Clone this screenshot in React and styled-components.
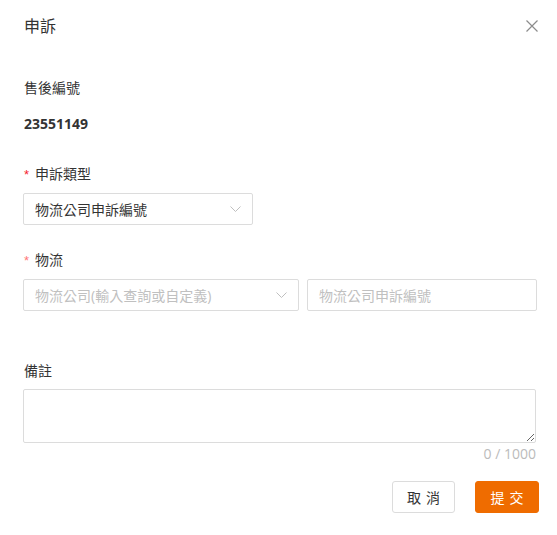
import React from "react";
import styled, { createGlobalStyle } from "styled-components";

const Global = createGlobalStyle`
  html, body { margin: 0; padding: 0; background: #fff; }
  body {
    font-family: "Open Sans", "Noto Sans CJK TC", sans-serif;
    color: #333;
    font-size: 14px;
  }
  * { box-sizing: border-box; }
`;

const Dialog = styled.div`
  width: 557px;
  height: 535px;
  background: #fff;
  display: flex;
  flex-direction: column;
`;

const Header = styled.div`
  height: 52px;
  display: flex;
  align-items: center;
  justify-content: space-between;
  padding: 0 19px 0 23px;
`;

const Title = styled.div`
  font-size: 16px;
  line-height: 20px;
  color: #333;
  padding-left: 1px;
`;

const Close = styled.button`
  border: 0;
  background: none;
  padding: 0;
  width: 12px;
  height: 12px;
  display: flex;
  cursor: pointer;
`;

const Body = styled.div`
  padding: 26px 20px 0 23px;
  display: flex;
  flex-direction: column;
`;

const Label = styled.div`
  font-size: 14px;
  line-height: 20px;
  color: #333;
  padding-left: 1px;
  margin-top: ${(p) => p.$mt || 0}px;
  display: flex;
  align-items: center;
`;

const Star = styled.span`
  color: ${(p) => p.$color};
  margin-right: 6px;
  font-family: "Liberation Sans", sans-serif;
  font-size: 13px;
  position: relative;
  top: 1px;
`;

const Value = styled.div`
  font-weight: 700;
  font-size: 14px;
  line-height: 20px;
  color: #333;
  margin-top: 16px;
  padding-left: 1px;
`;

const Row = styled.div`
  display: flex;
  gap: 8px;
  margin-top: 9px;
`;

const SelectBox = styled.div`
  width: ${(p) => p.$w}px;
  height: 32px;
  border: 1px solid #dcdcdc;
  border-radius: 2px;
  display: flex;
  align-items: center;
  justify-content: space-between;
  padding: 0 11px 0 11px;
  font-size: 14px;
  color: ${(p) => (p.$placeholder ? "#c0c0c0" : "#333")};
`;

const InputBox = styled.div`
  width: ${(p) => p.$w}px;
  height: 32px;
  border: 1px solid #dcdcdc;
  border-radius: 2px;
  display: flex;
  align-items: center;
  padding: 0 11px;
  font-size: 14px;
  color: #c0c0c0;
`;

const TextArea = styled.textarea`
  display: block;
  width: 513px;
  height: 54px;
  margin-top: 8px;
  border: 1px solid #dcdcdc;
  border-radius: 2px;
  outline: none;
  font-family: inherit;
  font-size: 14px;
`;

const Counter = styled.div`
  width: 513px;
  text-align: right;
  color: #bbb;
  font-size: 14px;
  line-height: 18px;
  margin-top: 2px;
`;

const Footer = styled.div`
  display: flex;
  justify-content: flex-end;
  gap: 20px;
  padding-right: 18px;
  margin-top: 18px;
`;

const Button = styled.button`
  height: 32px;
  width: ${(p) => p.$w}px;
  border-radius: 3px;
  font-family: "Noto Sans CJK TC", sans-serif;
  font-size: 14px;
  letter-spacing: 5px;
  text-indent: 5px;
  padding: 0;
  cursor: pointer;
  border: 1px solid ${(p) => (p.$primary ? "#ef6c00" : "#dcdcdc")};
  background: ${(p) => (p.$primary ? "#ef6c00" : "#fff")};
  color: ${(p) => (p.$primary ? "#fff" : "#333")};
`;

const Chevron = () => (
  <svg width="11" height="6" viewBox="0 0 11 6" fill="none">
    <path d="M0.5 0.5 L5.5 5.5 L10.5 0.5" stroke="#bfbfbf" strokeWidth="1" />
  </svg>
);

export default function App() {
  return (
    <>
      <Global />
      <Dialog>
        <Header>
          <Title>申訴</Title>
          <Close aria-label="close">
            <svg width="12" height="12" viewBox="0 0 12 12">
              <path d="M0.5 0.5 L11.5 11.5 M11.5 0.5 L0.5 11.5" stroke="#8c8c8c" strokeWidth="1.2" />
            </svg>
          </Close>
        </Header>
        <Body>
          <Label>售後編號</Label>
          <Value>23551149</Value>
          <Label $mt={30}>
            <Star $color="#f5222d">*</Star>申訴類型
          </Label>
          <Row>
            <SelectBox $w={230}>
              物流公司申訴編號
              <Chevron />
            </SelectBox>
          </Row>
          <Label $mt={25}>
            <Star $color="#f77">*</Star>物流
          </Label>
          <Row>
            <SelectBox $w={276} $placeholder>
              物流公司(輸入查詢或自定義)
              <Chevron />
            </SelectBox>
            <InputBox $w={230}>物流公司申訴編號</InputBox>
          </Row>
          <Label $mt={50}>備註</Label>
          <TextArea />
          <Counter>0 / 1000</Counter>
        </Body>
        <Footer>
          <Button $w={63}>取消</Button>
          <Button $w={64} $primary>提交</Button>
        </Footer>
      </Dialog>
    </>
  );
}
